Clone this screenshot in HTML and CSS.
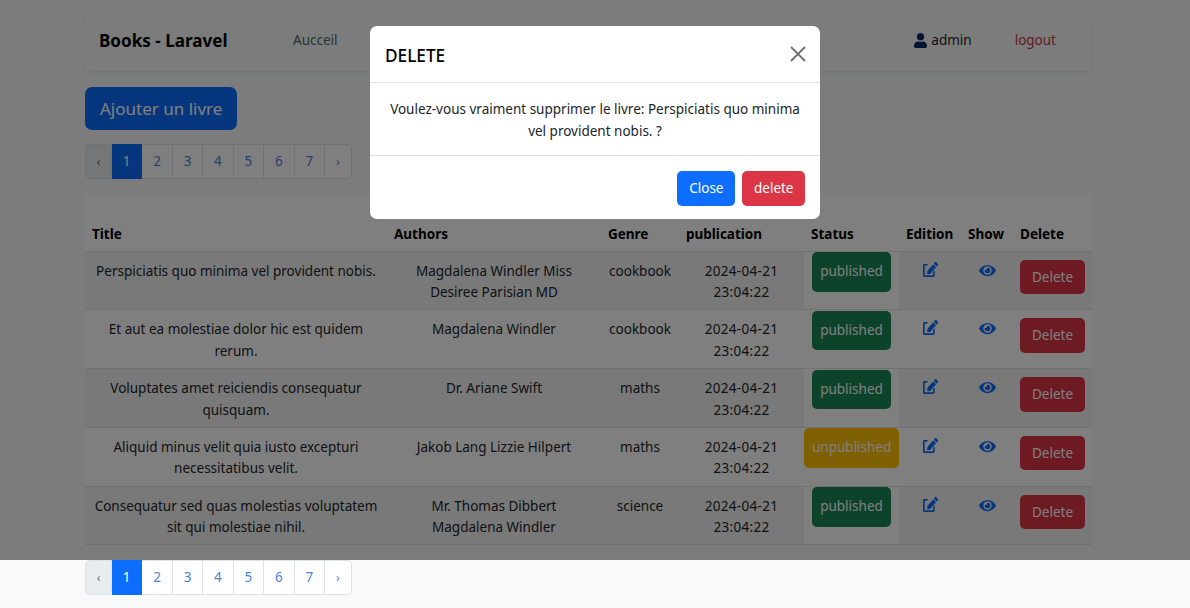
FILE: index.html
```html
<!DOCTYPE html>
<html>
<head>
  <title>Books - Laravel</title>
  <link rel="stylesheet" href="styles.css">
</head>
<body>
  <div class="container">
    <nav class="navbar">
      <a class="brand">Books - Laravel</a>
      <a class="nav-link">Aucceil</a>
      <div class="nav-right">
        <a class="nav-user">
          <svg class="icon-user" viewBox="0 0 448 512"><path d="M224 256c70.7 0 128-57.3 128-128S294.7 0 224 0 96 57.3 96 128s57.3 128 128 128zm89.6 32h-16.7c-22.2 10.2-46.9 16-72.9 16s-50.6-5.8-72.9-16h-16.7C60.2 288 0 348.2 0 422.4V464c0 26.5 21.5 48 48 48h352c26.5 0 48-21.5 48-48v-41.6c0-74.2-60.2-134.4-134.4-134.4z"/></svg>
          admin
        </a>
        <a class="nav-logout">logout</a>
      </div>
    </nav>

    <a class="btn-add">Ajouter un livre</a>

    <ul class="pagination">
      <li class="page disabled arrow">‹</li>
      <li class="page active">1</li>
      <li class="page">2</li>
      <li class="page">3</li>
      <li class="page">4</li>
      <li class="page">5</li>
      <li class="page">6</li>
      <li class="page">7</li>
      <li class="page arrow">›</li>
    </ul>

    <table class="books">
      <colgroup>
        <col class="col-title">
        <col class="col-authors">
        <col class="col-genre">
        <col class="col-date">
        <col class="col-status">
        <col class="col-edit">
        <col class="col-show">
        <col class="col-delete">
      </colgroup>
      <thead>
        <tr>
          <th>Title</th>
          <th>Authors</th>
          <th>Genre</th>
          <th>publication</th>
          <th>Status</th>
          <th>Edition</th>
          <th>Show</th>
          <th>Delete</th>
        </tr>
      </thead>
      <tbody>
        <tr>
          <td>Perspiciatis quo minima vel provident nobis.</td>
          <td>Magdalena Windler Miss Desiree Parisian MD</td>
          <td>cookbook</td>
          <td class="cell-date">2024-04-21 23:04:22</td>
          <td class="cell-status"><span class="badge published">published</span></td>
          <td><svg class="icon-edit" viewBox="0 0 576 512" preserveAspectRatio="none"><use href="#edit"/></svg></td>
          <td><svg class="icon-eye" viewBox="0 0 576 512"><use href="#eye"/></svg></td>
          <td><a class="btn-delete">Delete</a></td>
        </tr>
        <tr>
          <td>Et aut ea molestiae dolor hic est quidem rerum.</td>
          <td>Magdalena Windler</td>
          <td>cookbook</td>
          <td class="cell-date">2024-04-21 23:04:22</td>
          <td class="cell-status"><span class="badge published">published</span></td>
          <td><svg class="icon-edit" viewBox="0 0 576 512" preserveAspectRatio="none"><use href="#edit"/></svg></td>
          <td><svg class="icon-eye" viewBox="0 0 576 512"><use href="#eye"/></svg></td>
          <td><a class="btn-delete">Delete</a></td>
        </tr>
        <tr>
          <td>Voluptates amet reiciendis consequatur quisquam.</td>
          <td>Dr. Ariane Swift</td>
          <td>maths</td>
          <td class="cell-date">2024-04-21 23:04:22</td>
          <td class="cell-status"><span class="badge published">published</span></td>
          <td><svg class="icon-edit" viewBox="0 0 576 512" preserveAspectRatio="none"><use href="#edit"/></svg></td>
          <td><svg class="icon-eye" viewBox="0 0 576 512"><use href="#eye"/></svg></td>
          <td><a class="btn-delete">Delete</a></td>
        </tr>
        <tr>
          <td>Aliquid minus velit quia iusto excepturi necessitatibus velit.</td>
          <td>Jakob Lang Lizzie Hilpert</td>
          <td>maths</td>
          <td class="cell-date">2024-04-21 23:04:22</td>
          <td class="cell-status"><span class="badge unpublished">unpublished</span></td>
          <td><svg class="icon-edit" viewBox="0 0 576 512" preserveAspectRatio="none"><use href="#edit"/></svg></td>
          <td><svg class="icon-eye" viewBox="0 0 576 512"><use href="#eye"/></svg></td>
          <td><a class="btn-delete">Delete</a></td>
        </tr>
        <tr>
          <td>Consequatur sed quas molestias voluptatem sit qui molestiae nihil.</td>
          <td>Mr. Thomas Dibbert<br>Magdalena Windler</td>
          <td>science</td>
          <td class="cell-date">2024-04-21 23:04:22</td>
          <td class="cell-status"><span class="badge published">published</span></td>
          <td><svg class="icon-edit" viewBox="0 0 576 512" preserveAspectRatio="none"><use href="#edit"/></svg></td>
          <td><svg class="icon-eye" viewBox="0 0 576 512"><use href="#eye"/></svg></td>
          <td><a class="btn-delete">Delete</a></td>
        </tr>
      </tbody>
    </table>

    <ul class="pagination pagination-bottom">
      <li class="page disabled arrow">‹</li>
      <li class="page active">1</li>
      <li class="page">2</li>
      <li class="page">3</li>
      <li class="page">4</li>
      <li class="page">5</li>
      <li class="page">6</li>
      <li class="page">7</li>
      <li class="page arrow">›</li>
    </ul>
  </div>

  <svg class="icon-defs">
    <defs>
      <path id="edit" d="M402.6 83.2l90.2 90.2c3.8 3.8 3.8 10 0 13.8L274.4 405.6l-92.8 10.3c-12.4 1.4-22.9-9.1-21.5-21.5l10.3-92.8L388.8 83.2c3.8-3.8 10-3.8 13.8 0zm162-22.9l-48.8-48.8c-15.2-15.2-39.9-15.2-55.2 0l-35.4 35.4c-3.8 3.8-3.8 10 0 13.8l90.2 90.2c3.8 3.8 10 3.8 13.8 0l35.4-35.4c15.2-15.3 15.2-40 0-55.2zM384 346.2V448H64V128h73.1c3.2 0 6.2-1.3 8.5-3.5l40-40c7.6-7.6 2.2-20.5-8.5-20.5H48C21.5 64 0 85.5 0 112v352c0 26.5 21.5 48 48 48h352c26.5 0 48-21.5 48-48V306.2c0-10.7-12.9-16-20.5-8.5l-40 40c-2.2 2.3-3.5 5.3-3.5 8.5z"/>
      <path id="eye" d="M572.52 241.4C518.29 135.59 410.93 64 288 64S57.68 135.64 3.48 241.41a32.35 32.35 0 0 0 0 29.19C57.71 376.41 165.07 448 288 448s230.32-71.64 284.52-177.41a32.35 32.35 0 0 0 0-29.19zM288 400a144 144 0 1 1 144-144 143.93 143.93 0 0 1-144 144zm0-240a95.31 95.31 0 0 0-25.31 3.79 47.85 47.85 0 0 1-66.9 66.9A95.78 95.78 0 1 0 288 160z"/>
    </defs>
  </svg>

  <div class="backdrop"></div>

  <div class="modal">
    <div class="modal-header">
      <h5 class="modal-title">DELETE</h5>
      <svg class="modal-close" viewBox="0 0 16 16"><path d="M1 1l14 14M15 1L1 15"/></svg>
    </div>
    <div class="modal-body">Voulez-vous vraiment supprimer le livre: Perspiciatis quo minima vel provident nobis. ?</div>
    <div class="modal-footer">
      <a class="btn-close-modal">Close</a>
      <a class="btn-confirm">delete</a>
    </div>
  </div>
</body>
</html>
```

FILE: styles.css
```css
html, body {
  height: 608px;
  overflow: hidden;
}
body {
  font-family: "Noto Sans", sans-serif;
  font-size: 13.5px;
  line-height: 21.6px;
  color: #212529;
  background-color: #f8f9fa;
  margin: 0;
}
a {
  text-decoration: none;
}
.container {
  width: 1007px;
  margin-left: 85px;
  padding-top: 12px;
}

.navbar {
  display: flex;
  align-items: center;
  box-sizing: border-box;
  height: 59px;
  padding: 0 14px 2px;
  border-radius: 5px;
  background-color: #f8f9fa;
  box-shadow: 0 2px 4px rgba(0, 0, 0, 0.075);
}
.brand {
  font-size: 17.1px;
  font-weight: 700;
  color: #000;
  width: 194px;
}
.nav-link {
  color: #4f6a64;
}
.nav-right {
  display: flex;
  align-items: center;
  margin-left: auto;
  margin-right: 22px;
  gap: 43px;
}
.nav-user {
  display: flex;
  align-items: center;
  gap: 4px;
  color: #212529;
}
.icon-user {
  width: 13px;
  height: 15px;
  fill: #052c65;
}
.nav-logout {
  color: #c23a48;
}

.btn-add {
  display: inline-block;
  margin-top: 16px;
  padding: 10px 15px;
  height: 23px;
  font-size: 17px;
  line-height: 23px;
  color: #fff;
  background-color: #0d6efd;
  border-radius: 7px;
}

.pagination {
  display: flex;
  list-style: none;
  width: 267px;
  height: 35px;
  margin: 14px 0 0;
  padding: 0;
}
.pagination-bottom {
  margin-top: 15px;
}
.page {
  display: flex;
  align-items: center;
  justify-content: center;
  box-sizing: border-box;
  flex: 1 1 30px;
  color: #4d82d6;
  background-color: #fff;
  border: 1px solid #dee2e6;
  border-left: 0;
}
.page.arrow {
  flex: 0 0 27px;
  font-size: 12px;
}
.page:first-child {
  border-left: 1px solid #dee2e6;
  border-radius: 5px 0 0 5px;
}
.page:last-child {
  border-radius: 0 5px 5px 0;
}
.page.active {
  color: #fff;
  background-color: #0d6efd;
  border-color: #0d6efd;
}
.page.disabled {
  color: #6c757d;
  background-color: #e9ecef;
}

.books {
  width: 1007px;
  margin-top: 16px;
  table-layout: fixed;
  border-collapse: collapse;
  background-color: #fff;
}
.col-title { width: 302px; }
.col-authors { width: 214px; }
.col-genre { width: 78px; }
.col-date { width: 125px; }
.col-status { width: 95px; }
.col-edit { width: 62px; }
.col-show { width: 52px; }
.col-delete { width: 79px; }
.books th {
  height: 56px;
  padding: 7px 7px 5px;
  box-sizing: border-box;
  text-align: left;
  vertical-align: bottom;
  font-weight: 700;
  color: #000;
  border-bottom: 1px solid #dee2e6;
}
.books td {
  height: 58.8px;
  padding: 9px 7.2px 5px;
  box-sizing: border-box;
  text-align: center;
  vertical-align: top;
  border-bottom: 1px solid #dee2e6;
}
.books tbody tr:nth-child(odd) td {
  background-color: #f2f2f2;
}
.books td.cell-date {
  letter-spacing: 0.3px;
}
.books tbody tr td.cell-status {
  padding: 0.5px 0 0;
  background-color: #fff;
}
.badge {
  display: inline-block;
  padding: 9px 8px;
  color: #fff;
  border-radius: 5px;
}
.published {
  background-color: #198754;
}
.unpublished {
  background-color: #ffc107;
}
.icon-edit {
  width: 15px;
  height: 15px;
  margin-top: 1px;
  fill: #0d6efd;
}
.icon-eye {
  width: 17px;
  height: 15px;
  margin-top: 2px;
  fill: #0d6efd;
}
.btn-delete {
  display: inline-block;
  margin-top: -1px;
  padding: 7px 11.5px 6px;
  color: #fff;
  background-color: #dc3545;
  border-radius: 5px;
}
.icon-defs {
  position: absolute;
  width: 0;
  height: 0;
}

.backdrop {
  position: absolute;
  top: 0;
  left: 0;
  width: 1190px;
  height: 560px;
  background-color: rgba(0, 0, 0, 0.5);
}
.modal {
  position: absolute;
  top: 26px;
  left: 370px;
  width: 450px;
  height: 193px;
  background-color: #fff;
  border-radius: 7px;
}
.modal-header {
  display: flex;
  align-items: center;
  justify-content: space-between;
  height: 56px;
  padding: 0 14px 0 15px;
  border-bottom: 1px solid #dee2e6;
}
.modal-title {
  margin: 3px 0 0;
  font-size: 17.2px;
  font-weight: 500;
  color: #000;
}
.modal-close {
  width: 16px;
  height: 16px;
  stroke: #6f6f6f;
  stroke-width: 1.8;
  fill: none;
}
.modal-body {
  height: 73px;
  padding: 16px 14px 0;
  box-sizing: border-box;
  text-align: center;
  border-bottom: 1px solid #dee2e6;
}
.modal-footer {
  display: flex;
  justify-content: flex-end;
  gap: 7px;
  padding: 15px 15px 0;
}
.btn-close-modal, .btn-confirm {
  padding: 7px 12px 6px;
  color: #fff;
  border-radius: 5px;
}
.btn-close-modal {
  background-color: #0d6efd;
}
.btn-confirm {
  padding: 7px 11.5px 6px;
  background-color: #dc3545;
}
```
